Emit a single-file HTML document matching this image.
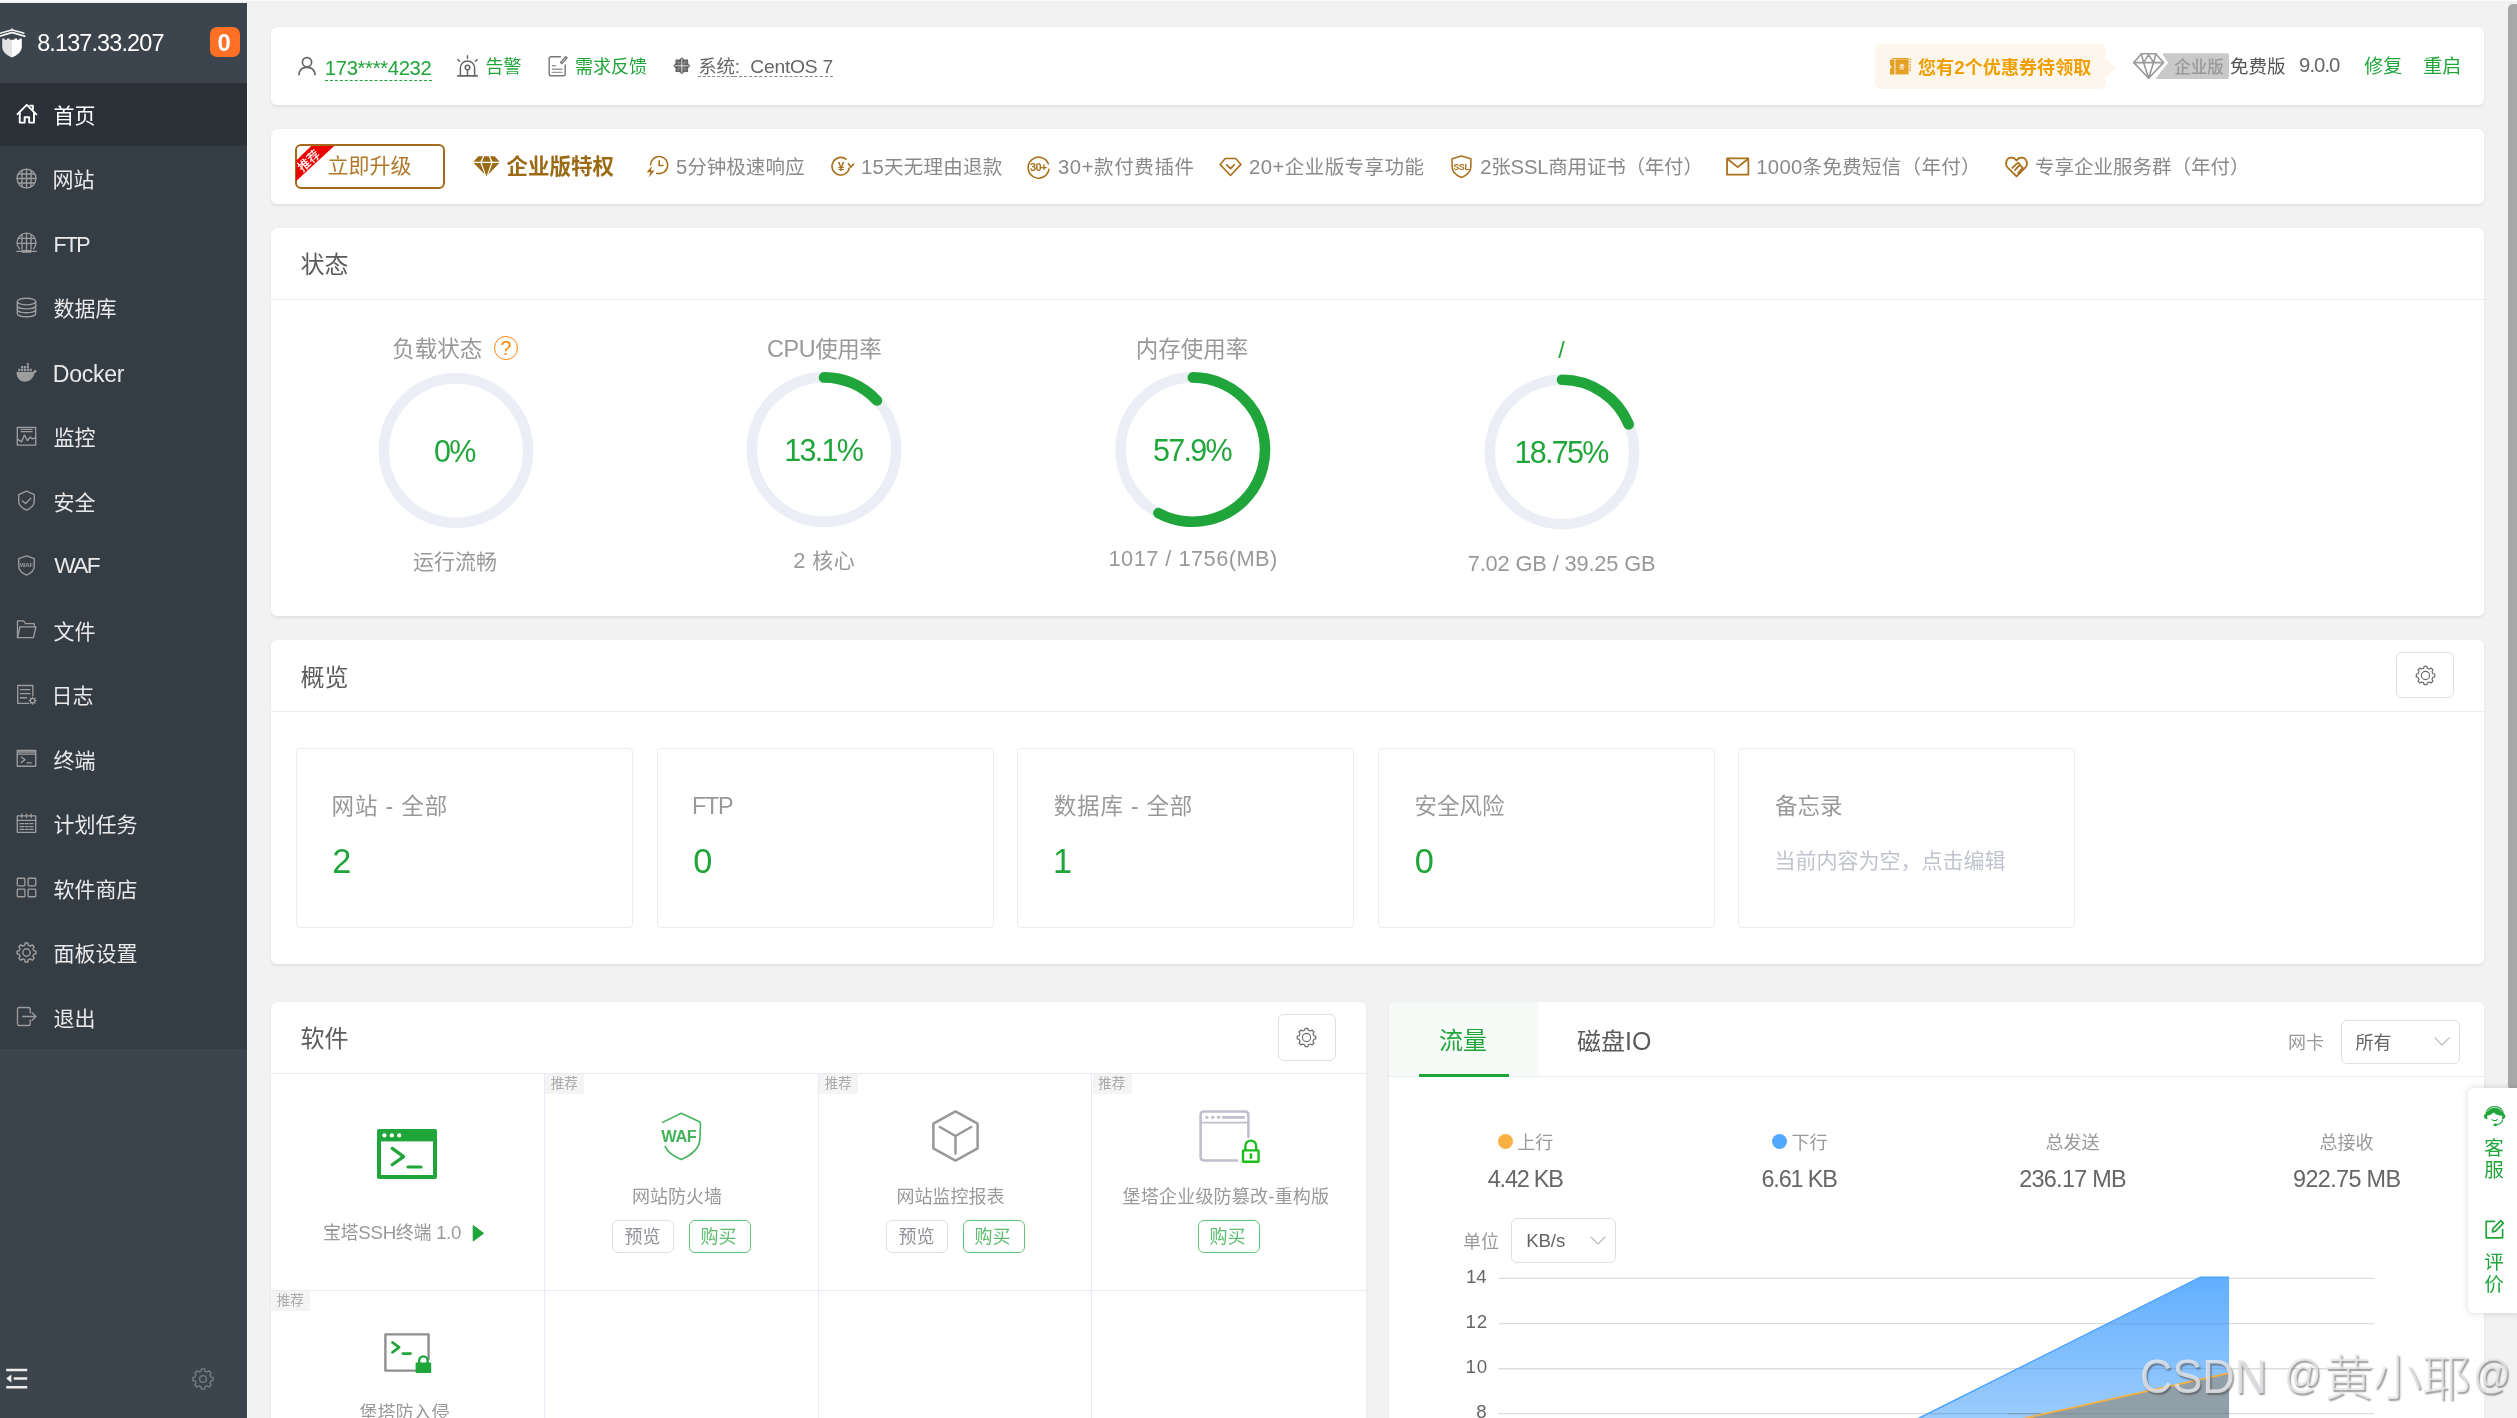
<!DOCTYPE html>
<html lang="zh-CN">
<head>
<meta charset="utf-8">
<title>宝塔Linux面板</title>
<style>
*{box-sizing:border-box;margin:0;padding:0}
html,body{width:2517px;height:1418px;background:#f2f2f2}
body{position:relative;font-family:"Liberation Sans","Noto Sans CJK SC",sans-serif}
#app{left:0;top:0;width:2517px;height:1418px;overflow:hidden;background:#f2f2f2;will-change:transform}
i{font-style:normal}
body div,body svg,body .t{position:absolute}
.t{white-space:nowrap;display:block}
.card{background:#fff;border-radius:6px;box-shadow:0 1.5px 3px 0 rgba(0,0,0,.07)}
svg{overflow:visible}
</style>
</head>
<body>
<div id="app">
<!-- sec_sidebar -->
<div class="side" style="left:0;top:3px;width:247px;height:1415px;background:#3c444d"></div>
<div style="left:0;top:83px;width:247px;height:965.5px;background:#353d44"></div>
<div style="left:0;top:83px;width:247px;height:63px;background:#2c3138"></div>
<div style="left:0;top:1336.6px;width:247px;height:1.2px;background:#38434a"></div>
<svg style="left:0px;top:27px;" width="26" height="31" viewBox="0 0 26 31"><g fill="#f2f2f2"><path d="M12 0.2 L12.6 2.2 L24.6 5.6 L24.2 7 L12 3.8 L0 7 L-0.4 5.6 L11.4 2.2Z"/><path d="M12 4.6 L25.6 8.6 L25.2 10.2 L12 6.4 L-1 10.2 L-1.4 8.6Z"/><path d="M2.2 11.4 H4.6 V12.8 H7 V11.4 H9.6 V12.8 H12 V30.4 C6.2 27.8 2.2 24.6 2.2 19.4Z" fill="#e4e4e4"/><path d="M12 12.8 H14.4 V11.4 H17 V12.8 H19.4 V11.4 H21.8 V19.4 C21.8 24.6 17.8 27.8 12 30.4Z" fill="#fff"/></g></svg>
<span class="t" style="left:37.2px;top:20.5px;font-size:22.5px;line-height:45px;color:#fff;letter-spacing:-0.85px;"><i style="font-size:1.04em">8.137.33.207</i></span>
<div style="left:210px;top:27px;width:30px;height:30px;background:#ff6f24;border-radius:7px"></div>
<span class="t" style="left:217.4px;top:19.5px;font-size:23px;line-height:46px;color:#fff;font-weight:700;"><i style="font-size:1.04em">0</i></span>
<svg style="left:15.9px;top:102.6px;" width="21" height="21" viewBox="-0.25 -0.25 20.5 20.5"><g fill="none" stroke="#fff" stroke-width="1.9" stroke-linecap="round" stroke-linejoin="round"><path d="M1.2 10.6 L10.3 1.6 L19.6 10.8"/><path d="M3.4 9.2 V18.9 H8.2 V13.6 H12.6 V18.9 H17.3 V9.2"/><path d="M13.6 2.3 H16.2 V5.6"/></g></svg>
<span class="t" style="left:53.5px;top:95.1px;font-size:21px;line-height:42px;color:#fff;">首页</span>
<svg style="left:15.9px;top:167.6px;" width="21" height="21" viewBox="-0.25 -0.25 20.5 20.5"><g fill="none" stroke="#9d9d9d" stroke-width="1.3" stroke-linecap="round" stroke-linejoin="round"><circle cx="10" cy="10" r="9.2"/><path d="M2 5.6H18M2 14.4H18M5.6 2V18M14.4 2V18M10 1V19M1 10H19" stroke-width="1.3"/></g></svg>
<span class="t" style="left:52.5px;top:158.7px;font-size:21px;line-height:42px;color:#e9e9e9;">网站</span>
<svg style="left:15.9px;top:232.1px;" width="21" height="21" viewBox="-0.25 -0.25 20.5 20.5"><g fill="none" stroke="#9d9d9d" stroke-width="1.3" stroke-linecap="round" stroke-linejoin="round"><path d="M3.2 16.2 A9.2 9.2 0 1 1 16.8 16.2"/><path d="M2 6H18M1 10.8H19M5.6 2.4V16.4M14.4 2.4V16.4M10 1V17" stroke-width="1.3"/><path d="M0.5 18.6H19.5" stroke-width="1.2"/><path d="M6 18.6H14" stroke-width="2.6"/></g></svg>
<span class="t" style="left:53.5px;top:224.1px;font-size:21px;line-height:42px;color:#e9e9e9;letter-spacing:-1.8px;letter-spacing:-1.7px"><i style="font-size:1.02em">FTP</i></span>
<svg style="left:15.9px;top:296.6px;" width="21" height="21" viewBox="-0.25 -0.25 20.5 20.5"><g fill="none" stroke="#9d9d9d" stroke-width="1.3" stroke-linecap="round" stroke-linejoin="round"><ellipse cx="10" cy="4.2" rx="9" ry="3.2"/><path d="M1 4.2V15.8C1 17.6 5 19 10 19S19 17.6 19 15.8V4.2"/><path d="M1 8.2C1 10 5 11.3 10 11.3S19 10 19 8.2M1 12C1 13.8 5 15.1 10 15.1S19 13.8 19 12"/></g></svg>
<span class="t" style="left:53.5px;top:287.7px;font-size:21px;line-height:42px;color:#e9e9e9;">数据库</span>
<svg style="left:15.9px;top:361.1px;" width="21" height="21" viewBox="-0.25 -0.25 20.5 20.5"><g fill="#9d9d9d" transform="translate(-0.4 1.6) scale(1.04)"><path d="M0.6 8.6H16.2C16.6 7.4 17.2 6.6 18.2 6.2C18.4 7 18.9 7.4 19.8 7.4C19.6 8.6 18.8 9.2 17.6 9.4C16.6 14.4 13 17.6 8.2 17.6C3.8 17.6 0.6 14.2 0.6 8.6Z"/><path d="M2.2 5.6H4.2V7.8H2.2zM4.9 5.6H6.9V7.8H4.9zM7.6 5.6H9.6V7.8H7.6zM10.3 5.6H12.3V7.8H10.3zM13 5.6H15V7.8H13zM4.9 2.9H6.9V5H4.9zM7.6 2.9H9.6V5H7.6zM10.3 2.9H12.3V5H10.3zM10.3 0.4H12.3V2.4H10.3z"/></g></svg>
<span class="t" style="left:52.8px;top:352.7px;font-size:21px;line-height:42px;color:#e9e9e9;letter-spacing:-0.3px;"><i style="font-size:1.1em">Docker</i></span>
<svg style="left:15.9px;top:425.6px;" width="21" height="21" viewBox="-0.25 -0.25 20.5 20.5"><g fill="none" stroke="#9d9d9d" stroke-width="1.3" stroke-linecap="round" stroke-linejoin="round"><rect x="1" y="1.2" width="18" height="17.2"/><path d="M4.6 3.2H15.6M4.6 5.2H15.6" stroke-width="1.1"/><path d="M1.4 12.8 L5.2 15.2 L8 8.6 L11 14 L13.6 10.6 L15.6 12.2 L18.8 11.4"/></g></svg>
<span class="t" style="left:53.5px;top:416.7px;font-size:21px;line-height:42px;color:#e9e9e9;">监控</span>
<svg style="left:15.9px;top:490.1px;" width="21" height="21" viewBox="-0.25 -0.25 20.5 20.5"><g fill="none" stroke="#9d9d9d" stroke-width="1.3" stroke-linecap="round" stroke-linejoin="round"><path d="M10 0.8 L17.6 4.2 V10.6 C17.6 14.6 14.8 17.4 10 19.4 C5.2 17.4 2.4 14.6 2.4 10.6 V4.2 Z"/><path d="M6 10.4 L9.2 13 L14.2 7.8"/></g></svg>
<span class="t" style="left:53.5px;top:482.1px;font-size:21px;line-height:42px;color:#e9e9e9;">安全</span>
<svg style="left:15.9px;top:554.6px;" width="21" height="21" viewBox="-0.25 -0.25 20.5 20.5"><g fill="none" stroke="#9d9d9d" stroke-width="1.3" stroke-linecap="round" stroke-linejoin="round"><path d="M10 0.6 L17.6 3.4 V10.6 C17.6 14.6 14.8 17.4 10 19.4 C5.2 17.4 2.4 14.6 2.4 10.6 V3.4 Z"/></g><text x="10" y="11.8" text-anchor="middle" font-family="Liberation Sans,sans-serif" font-weight="700" font-size="6" fill="#9d9d9d">WAF</text></svg>
<span class="t" style="left:54.2px;top:544.2px;font-size:21px;line-height:42px;color:#e9e9e9;letter-spacing:-1.6px;"><i style="font-size:1.08em">WAF</i></span>
<svg style="left:15.9px;top:619.1px;" width="21" height="21" viewBox="-0.25 -0.25 20.5 20.5"><g fill="none" stroke="#9d9d9d" stroke-width="1.3" stroke-linecap="round" stroke-linejoin="round"><path d="M1.2 18 V1.6 H7 L9 4.2 H17.6 V7.4"/><path d="M1.2 18 L3.6 7.4 H19.2 L16.8 18 Z"/></g></svg>
<span class="t" style="left:53.5px;top:611.1px;font-size:21px;line-height:42px;color:#e9e9e9;">文件</span>
<svg style="left:15.9px;top:683.6px;" width="21" height="21" viewBox="-0.25 -0.25 20.5 20.5"><g fill="none" stroke="#9d9d9d" stroke-width="1.3" stroke-linecap="round" stroke-linejoin="round"><path d="M12 18.6 H1.4 V1.2 H16.2 V11"/><path d="M4 5.2H13.4M4 9.2H13.4M4 13.2H10"/><circle cx="16" cy="16" r="2.2"/><path d="M16 12.6V13.6M16 18.4V19.4M12.6 16H13.6M18.4 16H19.4M13.6 13.6L14.3 14.3M17.7 17.7L18.4 18.4M13.6 18.4L14.3 17.7M17.7 14.3L18.4 13.6" stroke-width="1.1"/></g></svg>
<span class="t" style="left:51.5px;top:674.7px;font-size:21px;line-height:42px;color:#e9e9e9;">日志</span>
<svg style="left:15.9px;top:748.1px;" width="21" height="21" viewBox="-0.25 -0.25 20.5 20.5"><g fill="none" stroke="#9d9d9d" stroke-width="1.3" stroke-linecap="round" stroke-linejoin="round"><rect x="1" y="2" width="18" height="15.6"/><path d="M1 5.8H19" /><path d="M1.4 3.4H18.6" stroke-width="2.4" stroke-linecap="butt" opacity=".75"/><path d="M5 8.6 L8.6 11.2 L5 13.8M10.4 14.2H14.6"/></g></svg>
<span class="t" style="left:53.5px;top:740.1px;font-size:21px;line-height:42px;color:#e9e9e9;">终端</span>
<svg style="left:15.9px;top:812.6px;" width="21" height="21" viewBox="-0.25 -0.25 20.5 20.5"><g fill="none" stroke="#9d9d9d" stroke-width="1.3" stroke-linecap="round" stroke-linejoin="round"><rect x="1" y="2.6" width="18" height="16"/><path d="M1 7H19M5.4 0.8V4.2M10 0.8V4.2M14.6 0.8V4.2"/><path d="M3.6 10.2H7.4M8.8 10.2H11.8M13.2 10.2H16.4M3.6 13H7.4M8.8 13H11.8M13.2 13H16.4M3.6 15.8H7.4M8.8 15.8H11.8M13.2 15.8H16.4" stroke-width="1.2"/></g></svg>
<span class="t" style="left:53.5px;top:803.7px;font-size:21px;line-height:42px;color:#e9e9e9;">计划任务</span>
<svg style="left:15.9px;top:877.1px;" width="21" height="21" viewBox="-0.25 -0.25 20.5 20.5"><g fill="none" stroke="#9d9d9d" stroke-width="1.3" stroke-linecap="round" stroke-linejoin="round"><rect x="1" y="1" width="7.4" height="7.4" rx="0.8"/><rect x="11.6" y="1" width="7.4" height="7.4" rx="0.8"/><rect x="1" y="11.6" width="7.4" height="7.4" rx="0.8"/><rect x="11.6" y="11.6" width="7.4" height="7.4" rx="0.8"/></g></svg>
<span class="t" style="left:53.5px;top:869.1px;font-size:21px;line-height:42px;color:#e9e9e9;">软件商店</span>
<svg style="left:15.9px;top:941.6px;" width="21" height="21" viewBox="-0.25 -0.25 20.5 20.5"><g fill="none" stroke="#9d9d9d" stroke-width="1.4" stroke-linejoin="round"><path d="M8.30 2.90 L8.62 0.80 L11.38 0.80 L11.70 2.90 L13.81 3.78 L15.53 2.52 L17.48 4.47 L16.22 6.19 L17.10 8.30 L19.20 8.62 L19.20 11.38 L17.10 11.70 L16.22 13.81 L17.48 15.53 L15.53 17.48 L13.81 16.22 L11.70 17.10 L11.38 19.20 L8.62 19.20 L8.30 17.10 L6.19 16.22 L4.47 17.48 L2.52 15.53 L3.78 13.81 L2.90 11.70 L0.80 11.38 L0.80 8.62 L2.90 8.30 L3.78 6.19 L2.52 4.47 L4.47 2.52 L6.19 3.78Z"/><circle cx="10" cy="10" r="3.6"/></g></svg>
<span class="t" style="left:53.5px;top:932.7px;font-size:21px;line-height:42px;color:#e9e9e9;">面板设置</span>
<svg style="left:15.9px;top:1006.1px;" width="21" height="21" viewBox="-0.25 -0.25 20.5 20.5"><g fill="none" stroke="#9d9d9d" stroke-width="1.3" stroke-linecap="round" stroke-linejoin="round"><path d="M13.6 6.4 V2.8 C13.6 1.8 13 1.2 12 1.2 H2.8 C1.8 1.2 1.2 1.8 1.2 2.8 V17.2 C1.2 18.2 1.8 18.8 2.8 18.8 H12 C13 18.8 13.6 18.2 13.6 17.2 V13.6"/><path d="M6.4 10H19M15.4 6.2 L19.2 10 L15.4 13.8"/></g></svg>
<span class="t" style="left:53.5px;top:998.1px;font-size:21px;line-height:42px;color:#e9e9e9;">退出</span>
<svg style="left:6px;top:1368px;" width="22" height="22" viewBox="0 0 22 22"><g fill="none" stroke="#ededed" stroke-width="2.5" stroke-linecap="butt"><path d="M0.2 2H21.2M7.8 10.6H21.2M0.2 19.2H21.2"/></g><path d="M0.2 10.6 L5.4 6.4 V14.8Z" fill="#ededed"/></svg>
<svg style="left:192px;top:1368px;" width="22" height="22" viewBox="0 0 22 22"><g fill="none" stroke="#757b82" stroke-width="1.4" stroke-linejoin="round"><path d="M9.09 3.03 L9.48 0.91 L12.52 0.91 L12.91 3.03 L15.28 4.01 L17.06 2.80 L19.20 4.94 L17.99 6.72 L18.97 9.09 L21.09 9.48 L21.09 12.52 L18.97 12.91 L17.99 15.28 L19.20 17.06 L17.06 19.20 L15.28 17.99 L12.91 18.97 L12.52 21.09 L9.48 21.09 L9.09 18.97 L6.72 17.99 L4.94 19.20 L2.80 17.06 L4.01 15.28 L3.03 12.91 L0.91 12.52 L0.91 9.48 L3.03 9.09 L4.01 6.72 L2.80 4.94 L4.94 2.80 L6.72 4.01Z"/><circle cx="11" cy="11" r="3.4"/></g></svg>
<!-- sec_top -->
<div style="left:0;top:0;width:2517px;height:3px;background:linear-gradient(#fcfcfc,#f4f4f4 55%,#e6e6e6)"></div>
<div style="left:247px;top:3px;width:1px;height:1415px;background:#f8f8f8"></div>
<div class="card" style="left:271px;top:27px;width:2213px;height:78px"></div>
<svg style="left:298px;top:56px;" width="18" height="20" viewBox="0 0 18 20"><g fill="none" stroke="#666" stroke-width="1.7" stroke-linecap="round"><circle cx="9" cy="6.2" r="4.6"/><path d="M0.9 18.6 C1.4 13.6 4.6 11.4 9 11.4 S16.6 13.6 17.1 18.6"/></g></svg>
<span class="t" style="left:324.8px;top:49px;font-size:19.5px;line-height:39px;color:#20a53a;letter-spacing:-0.35px;"><i style="font-size:1.04em">173****4232</i></span>
<div style="left:325px;top:79.7px;width:107px;height:0;border-top:1.5px dashed #20a53a"></div>
<svg style="left:457px;top:55px;" width="21" height="22" viewBox="0 0 21 22"><g fill="none" stroke="#666" stroke-width="1.5" stroke-linecap="round"><path d="M3.4 20.6 V13 A7.1 7.1 0 0 1 17.6 13 V20.6"/><path d="M0.8 20.8 H20.2" stroke-width="1.7"/><circle cx="10.5" cy="12.6" r="2.3"/><path d="M10.5 15 V20.4M10.5 0.8 V3.2M0.9 4.6 L2.4 6.2M20.1 4.6 L18.6 6.2"/></g></svg>
<span class="t" style="left:485.5px;top:49px;font-size:18px;line-height:36px;color:#20a53a;">告警</span>
<svg style="left:548px;top:55px;" width="20" height="22" viewBox="0 0 20 22"><g fill="none" stroke="#777" stroke-width="1.4" stroke-linecap="round" stroke-linejoin="round"><path d="M12.4 1.8 H3 C2 1.8 1.2 2.6 1.2 3.6 V19 C1.2 20 2 20.8 3 20.8 H15.4 C16.4 20.8 17.2 20 17.2 19 V10"/><path d="M12.6 7.4 L17.6 1.6 L19 2.8 L14 8.6 Z"/><path d="M4.4 10.8 H7.4M4.4 14.2 H14M4.4 17.4 H14" stroke="#999"/></g></svg>
<span class="t" style="left:575px;top:49px;font-size:18px;line-height:36px;color:#20a53a;">需求反馈</span>
<svg style="left:673.4px;top:57.4px;" width="17.6" height="17.6" viewBox="0 0 17.6 17.6"><path d="M8.8 0.3 L11.3 2.5 H15.1 V6.3 L17.3 8.8 L15.1 11.3 V15.1 H11.3 L8.8 17.3 L6.3 15.1 H2.5 V11.3 L0.3 8.8 L2.5 6.3 V2.5 H6.3 Z" fill="#5c5c5c"/><g stroke="#fff" stroke-width="1" opacity=".8"><path d="M8.8 1.4V16.2M1.4 8.8H16.2"/></g><g stroke="#fff" stroke-width="0.55" opacity=".4"><path d="M3.4 3.4L14.2 14.2M14.2 3.4L3.4 14.2M5.7 2.6V15M11.9 2.6V15M2.6 5.7H15M2.6 11.9H15"/></g></svg>
<span class="t" style="left:698.2px;top:48px;font-size:18.5px;line-height:37px;color:#666;letter-spacing:-0.2px;text-decoration:underline dashed #888;text-decoration-thickness:1px;text-underline-offset:2.5px">系统<i style="font-size:1.04em">:  CentOS 7</i></span>
<div style="left:1875px;top:44px;width:231px;height:44.5px;background:#fdf6ec;border-radius:6px"></div>
<div style="left:2105.8px;top:58.6px;width:0;height:0;border-top:9.7px solid transparent;border-bottom:9.7px solid transparent;border-left:11.8px solid #fdf6ec"></div>
<svg style="left:1890px;top:58px;" width="21" height="17" viewBox="0 0 21 17"><g fill="#e3a024"><path d="M0 1.4 H4.4 V16.4 H0 V10.6 Q1.6 10.2 1.6 8.9 Q1.6 7.6 0 7.2 Z"/><path d="M2.4 0 H18.6 V1.2 H2.4 Z"/><path d="M5.4 1.4 H18.6 V16.4 H5.4 Z"/><path d="M19.4 0.4 H20.8 V2 H19.4zM19.4 3.2 H20.8 V4.8 H19.4zM19.4 6 H20.8 V7.6 H19.4zM19.4 8.8 H20.8 V10.4 H19.4zM19.4 11.6 H20.8 V13.2 H19.4z"/></g><g stroke="#fdf6ec" stroke-width="0.9" fill="none"><path d="M9.6 7.4 H14.2M9.2 9.2 H14.6M11.9 6 V9.2M10 12 L11.9 9.6 L13.8 12M10.6 6.2 L11 7M13.2 6.2 L12.8 7"/></g></svg>
<span class="t" style="left:1918px;top:49.5px;font-size:18px;line-height:36px;color:#ef9f00;font-weight:700;letter-spacing:0.1px;">您有<i style="font-size:1.04em">2</i>个优惠券待领取</span>
<svg style="left:2133px;top:52px;" width="97" height="28" viewBox="0 0 97 28"><path d="M30.6 1.2 H94 Q96 1.2 96 3.2 V25 Q96 27 94 27 H23.4 Q22.2 27 23 26 L34.6 11.6 Q35.2 10.8 34.6 10 L29.8 2.4 Q29.2 1.2 30.6 1.2Z" fill="#c9c9c9"/><g fill="none" stroke="#999" stroke-width="1.6" stroke-linejoin="round" stroke-linecap="round"><path d="M8.4 1.8 H22.8 L30.4 10.6 L15.6 26.2 L0.8 10.6 Z"/><path d="M0.8 10.6 H30.4M8.4 1.8 L10.6 10.6 L15.6 26.2 L20.6 10.6 L22.8 1.8M10.6 10.6 L15.6 2.6 L20.6 10.6"/></g></svg>
<span class="t" style="left:2174.2px;top:50.5px;font-size:16.5px;line-height:33px;color:#999;font-weight:500;">企业版</span>
<span class="t" style="left:2229.9px;top:48.1px;font-size:18.5px;line-height:37px;color:#555;">免费版</span>
<span class="t" style="left:2299.1px;top:46.2px;font-size:19.5px;line-height:39px;color:#666;letter-spacing:-0.95px;"><i style="font-size:1.04em">9.0.0</i></span>
<span class="t" style="left:2364.2px;top:48.1px;font-size:19px;line-height:38px;color:#20a53a;">修复</span>
<span class="t" style="left:2423.2px;top:48.4px;font-size:19px;line-height:38px;color:#20a53a;">重启</span>
<div class="card" style="left:271px;top:129px;width:2213px;height:75px"></div>
<div style="left:295px;top:144px;width:150px;height:45px;border:2px solid #a6691c;border-radius:6px"></div>
<svg style="left:295px;top:144px;" width="45" height="45" viewBox="0 0 45 45"><path d="M1.2 16.4 L16.2 2 H39.2 L1.2 37 Z" fill="#ec0000"/></svg>
<span class="t" style="left:296.5px;top:148.6px;font-size:12.5px;line-height:25px;color:#fff;font-weight:500;transform:rotate(-42deg);transform-origin:50% 50%">推荐</span>
<span class="t" style="left:327.4px;top:144.8px;font-size:21px;line-height:42px;color:#b07a2a;">立即升级</span>
<svg style="left:473.2px;top:155.8px;" width="27.2" height="20.8" viewBox="0 0 27.2 20.8"><g fill="#9b6a14"><path d="M5.4 0.2 H10 L7.4 5.8 H0.4Z"/><path d="M11.2 0.2 H15.8 L18 5.8 H9Z"/><path d="M17 0.2 H21.6 L26.6 5.8 H19.6Z"/><path d="M0.6 7 H7.4 L11.8 18.6Z"/><path d="M8.8 7 H18.2 L13.5 20.6Z"/><path d="M19.6 7 H26.4 L15.2 18.6Z"/></g></svg>
<span class="t" style="left:506.5px;top:145.8px;font-size:21.5px;line-height:43px;color:#9b6a14;font-weight:700;">企业版特权</span>
<svg style="left:645.5px;top:155px;" width="23" height="23" viewBox="0 0 22 22"><g fill="none" stroke="#a8701a" stroke-width="1.5" stroke-linecap="round" stroke-linejoin="round"><path d="M4.4 9.4 A8.2 8.2 0 1 1 10.2 17.4"/><path d="M12.6 5.6 V10 H16.2"/></g><path d="M5.6 10.6 L0.6 16.6 H4.2 L2.6 21.6 L8.2 14.8 H4.6Z" fill="#a8701a"/></svg>
<span class="t" style="left:675.9px;top:148px;font-size:19.5px;line-height:39px;color:#8a8a8a;letter-spacing:0.05px;"><i style="font-size:1.04em">5</i>分钟极速响应</span>
<svg style="left:830.8px;top:155px;" width="23" height="23" viewBox="0 0 22 22"><g fill="none" stroke="#a8701a" stroke-width="1.5" stroke-linecap="round" stroke-linejoin="round"><path d="M17.6 12.4 A8.4 8.4 0 1 1 14.4 4"/><path d="M16.6 8.2 L19 11.6 L21.6 8.6"/></g><text x="9.6" y="15.2" text-anchor="middle" font-family="Liberation Sans,sans-serif" font-weight="700" font-size="11.5" fill="#a8701a">¥</text></svg>
<span class="t" style="left:860.9px;top:148px;font-size:19.5px;line-height:39px;color:#8a8a8a;letter-spacing:0.25px;"><i style="font-size:1.04em">15</i>天无理由退款</span>
<svg style="left:1027px;top:155px;" width="23" height="23" viewBox="0 0 22 22"><g fill="none" stroke="#a8701a" stroke-width="1.5" stroke-linecap="round"><path d="M20.4 8.4 A10 10 0 1 0 21 13.6"/></g><text x="10.8" y="15" text-anchor="middle" font-family="Liberation Sans,sans-serif" font-weight="700" font-size="10.5" letter-spacing="-0.6" fill="#a8701a">30+</text></svg>
<span class="t" style="left:1057.9px;top:148px;font-size:19.5px;line-height:39px;color:#8a8a8a;letter-spacing:0.6px;"><i style="font-size:1.04em">30+</i>款付费插件</span>
<svg style="left:1219px;top:155px;" width="23" height="23" viewBox="0 0 22 22"><g fill="none" stroke="#a8701a" stroke-width="1.5" stroke-linejoin="round" stroke-linecap="round"><path d="M6 3.4 H16 L21 9 L11 19.6 L1 9 Z"/><path d="M7.4 9.4 L11 13 L14.6 9.4"/></g></svg>
<span class="t" style="left:1249px;top:148px;font-size:19.5px;line-height:39px;color:#8a8a8a;letter-spacing:0.45px;"><i style="font-size:1.04em">20+</i>企业版专享功能</span>
<svg style="left:1451px;top:155px;" width="23" height="23" viewBox="0 0 22 22"><g fill="none" stroke="#a8701a" stroke-width="1.5" stroke-linejoin="round"><path d="M10 1 L19 3.6 V11 C19 16 15.4 19.4 10 21.6 C4.6 19.4 1 16 1 11 V3.6 Z"/></g><text x="10" y="14.4" text-anchor="middle" font-family="Liberation Sans,sans-serif" font-weight="700" font-size="8.6" letter-spacing="-0.3" fill="#a8701a">SSL</text></svg>
<span class="t" style="left:1480.2px;top:148px;font-size:19.5px;line-height:39px;color:#8a8a8a;letter-spacing:-0.2px;"><i style="font-size:1.04em">2</i>张<i style="font-size:1.04em">SSL</i>商用证书（年付）</span>
<svg style="left:1726px;top:155px;" width="23" height="23" viewBox="0 0 22 22"><g fill="none" stroke="#a8701a" stroke-width="1.7" stroke-linejoin="round"><rect x="1" y="3.2" width="20.4" height="15.6"/><path d="M1.4 3.8 L11.2 11.6 L21 3.8"/></g></svg>
<span class="t" style="left:1756.3px;top:148px;font-size:19.5px;line-height:39px;color:#8a8a8a;letter-spacing:0.3px;"><i style="font-size:1.04em">1000</i>条免费短信（年付）</span>
<svg style="left:2005px;top:155px;" width="23" height="23" viewBox="0 0 22 22"><g fill="none" stroke="#a8701a" stroke-width="1.7" stroke-linejoin="round" stroke-linecap="round"><path d="M11 20.4 L2.6 12 C-0.4 8.8 1 2.6 6.2 2.6 C8.4 2.6 10 3.8 11 5.4 C12 3.8 13.6 2.6 15.8 2.6 C21 2.6 22.4 8.8 19.4 12 Z"/><path d="M7 12.4 L11.6 8 C13 6.8 14.8 8.6 13.6 10 L9.6 14.4"/><path d="M14.4 9.6 L17 12.4 L12.6 17"/></g></svg>
<span class="t" style="left:2035px;top:148px;font-size:19.5px;line-height:39px;color:#8a8a8a;">专享企业服务群（年付）</span>
<!-- sec_status -->
<div class="card" style="left:271px;top:228px;width:2213px;height:388px"></div>
<div style="left:271px;top:299px;width:2213px;height:1px;background:#ececec"></div>
<span class="t" style="left:300.5px;top:241.1px;font-size:24px;line-height:48px;color:#5c5c5c;">状态</span>
<svg style="left:0;top:0" width="2517" height="700" viewBox="0 0 2517 700"><circle cx="456" cy="450.6" r="72.2" fill="none" stroke="#ebeef5" stroke-width="10.6"/></svg>
<span class="t" style="left:392.3px;top:327.2px;font-size:22.5px;line-height:45px;color:#999;">负载状态</span>
<span class="t" style="left:434px;top:420.8px;font-size:30.5px;line-height:61px;color:#20a53a;letter-spacing:-1.7px;">0%</span>
<span class="t" style="left:413px;top:541.1px;font-size:21px;line-height:42px;color:#999;">运行流畅</span>
<svg style="left:0;top:0" width="2517" height="700" viewBox="0 0 2517 700"><circle cx="824" cy="449.6" r="72.2" fill="none" stroke="#ebeef5" stroke-width="10.6"/><path d="M824 377.40000000000003 A72.2 72.2 0 0 1 876.94 400.51" fill="none" stroke="#20a53a" stroke-width="10.6" stroke-linecap="round"/></svg>
<span class="t" style="left:767.1px;top:326.9px;font-size:22.5px;line-height:45px;color:#999;letter-spacing:-0.45px;"><i style="font-size:1.04em">CPU</i>使用率</span>
<span class="t" style="left:784.2px;top:419.8px;font-size:30.5px;line-height:61px;color:#20a53a;letter-spacing:-1.7px;">13.1%</span>
<span class="t" style="left:793.3px;top:539.5px;font-size:21px;line-height:42px;color:#999;letter-spacing:0.45px;"><i style="font-size:1.04em">2</i> 核心</span>
<svg style="left:0;top:0" width="2517" height="700" viewBox="0 0 2517 700"><circle cx="1192.8" cy="449.6" r="72.2" fill="none" stroke="#ebeef5" stroke-width="10.6"/><path d="M1192.8 377.40000000000003 A72.2 72.2 0 1 1 1158.42 513.09" fill="none" stroke="#20a53a" stroke-width="10.6" stroke-linecap="round"/></svg>
<span class="t" style="left:1135.7px;top:326.9px;font-size:22.5px;line-height:45px;color:#999;">内存使用率</span>
<span class="t" style="left:1153px;top:419.8px;font-size:30.5px;line-height:61px;color:#20a53a;letter-spacing:-1.7px;">57.9%</span>
<span class="t" style="left:1108.5px;top:538.1px;font-size:21px;line-height:42px;color:#999;letter-spacing:0.45px;"><i style="font-size:1.04em">1017 / 1756(MB)</i></span>
<svg style="left:0;top:0" width="2517" height="700" viewBox="0 0 2517 700"><circle cx="1562" cy="452" r="72.2" fill="none" stroke="#ebeef5" stroke-width="10.6"/><path d="M1562 379.8 A72.2 72.2 0 0 1 1628.70 424.37" fill="none" stroke="#20a53a" stroke-width="10.6" stroke-linecap="round"/></svg>
<span class="t" style="left:1558.2px;top:328.4px;font-size:22.5px;line-height:45px;color:#20a53a;letter-spacing:1.5px;"><i style="font-size:1.04em">/</i></span>
<span class="t" style="left:1514.4px;top:422.2px;font-size:30.5px;line-height:61px;color:#20a53a;letter-spacing:-1.7px;">18.75%</span>
<span class="t" style="left:1467.7px;top:543px;font-size:21px;line-height:42px;color:#999;letter-spacing:-0.15px;"><i style="font-size:1.04em">7.02 GB / 39.25 GB</i></span>
<div style="left:494.1px;top:335.9px;width:23.8px;height:23.8px;border:1.6px solid #ff8206;border-radius:50%"></div>
<span class="t" style="left:500.6px;top:328.7px;font-size:19.5px;line-height:39px;color:#ff8206;">?</span>
<!-- sec_overview -->
<div class="card" style="left:271px;top:640px;width:2213px;height:324px"></div>
<div style="left:271px;top:711px;width:2213px;height:1px;background:#ececec"></div>
<span class="t" style="left:300.5px;top:653.6px;font-size:24px;line-height:48px;color:#5c5c5c;">概览</span>
<div style="left:2396px;top:652px;width:58px;height:46px;border:1px solid #dcdfe6;border-radius:6px;background:#fff"></div>
<svg style="left:2414.5px;top:665px;" width="21" height="21" viewBox="0 0 21 21"><g fill="none" stroke="#6a6c70" stroke-width="1.2" stroke-linejoin="round"><path d="M8.73 3.11 L9.12 1.30 L11.88 1.30 L12.27 3.11 L14.47 4.02 L16.03 3.02 L17.98 4.97 L16.98 6.53 L17.89 8.73 L19.70 9.12 L19.70 11.88 L17.89 12.27 L16.98 14.47 L17.98 16.03 L16.03 17.98 L14.47 16.98 L12.27 17.89 L11.88 19.70 L9.12 19.70 L8.73 17.89 L6.53 16.98 L4.97 17.98 L3.02 16.03 L4.02 14.47 L3.11 12.27 L1.30 11.88 L1.30 9.12 L3.11 8.73 L4.02 6.53 L3.02 4.97 L4.97 3.02 L6.53 4.02Z"/><circle cx="10.5" cy="10.5" r="4.1"/></g></svg>
<div style="left:296.0px;top:748px;width:337px;height:179.5px;border:1px solid #ebebeb;border-radius:4px"></div>
<span class="t" style="left:331.5px;top:783.5px;font-size:22.5px;line-height:45px;color:#999;letter-spacing:0.9px;">网站 <i style="font-size:1.04em">-</i> 全部</span>
<span class="t" style="left:332.2px;top:827.5px;font-size:33px;line-height:66px;color:#20a53a;letter-spacing:-0.5px;"><i style="font-size:1.04em">2</i></span>
<div style="left:656.6px;top:748px;width:337px;height:179.5px;border:1px solid #ebebeb;border-radius:4px"></div>
<span class="t" style="left:692px;top:783.5px;font-size:22.5px;line-height:45px;color:#999;letter-spacing:-1.25px;"><i style="font-size:1.04em">FTP</i></span>
<span class="t" style="left:693.2px;top:827.5px;font-size:33px;line-height:66px;color:#20a53a;letter-spacing:-0.5px;"><i style="font-size:1.04em">0</i></span>
<div style="left:1017.2px;top:748px;width:337px;height:179.5px;border:1px solid #ebebeb;border-radius:4px"></div>
<span class="t" style="left:1053.8px;top:783.5px;font-size:22.5px;line-height:45px;color:#999;letter-spacing:0.8px;">数据库 <i style="font-size:1.04em">-</i> 全部</span>
<span class="t" style="left:1053px;top:827.5px;font-size:33px;line-height:66px;color:#20a53a;letter-spacing:-1.8px;"><i style="font-size:1.04em">1</i></span>
<div style="left:1377.8px;top:748px;width:337px;height:179.5px;border:1px solid #ebebeb;border-radius:4px"></div>
<span class="t" style="left:1414.5px;top:783.5px;font-size:22.5px;line-height:45px;color:#999;">安全风险</span>
<span class="t" style="left:1414.8px;top:827.5px;font-size:33px;line-height:66px;color:#20a53a;letter-spacing:-0.5px;"><i style="font-size:1.04em">0</i></span>
<div style="left:1738.4px;top:748px;width:337px;height:179.5px;border:1px solid #ebebeb;border-radius:4px"></div>
<span class="t" style="left:1775px;top:783.5px;font-size:22.5px;line-height:45px;color:#999;">备忘录</span>
<span class="t" style="left:1774.5px;top:840px;font-size:21px;line-height:42px;color:#c0c4cc;">当前内容为空，点击编辑</span>
<!-- sec_soft -->
<div class="card" style="left:271px;top:1002px;width:1094.5px;height:430px;border-radius:6px 6px 0 0"></div>
<span class="t" style="left:300.5px;top:1014.6px;font-size:24px;line-height:48px;color:#5c5c5c;">软件</span>
<div style="left:1277.5px;top:1014px;width:58.5px;height:47px;border:1px solid #dcdfe6;border-radius:6px;background:#fff"></div>
<svg style="left:1296px;top:1027px;" width="21" height="21" viewBox="0 0 21 21"><g fill="none" stroke="#6a6c70" stroke-width="1.2" stroke-linejoin="round"><path d="M8.73 3.11 L9.12 1.30 L11.88 1.30 L12.27 3.11 L14.47 4.02 L16.03 3.02 L17.98 4.97 L16.98 6.53 L17.89 8.73 L19.70 9.12 L19.70 11.88 L17.89 12.27 L16.98 14.47 L17.98 16.03 L16.03 17.98 L14.47 16.98 L12.27 17.89 L11.88 19.70 L9.12 19.70 L8.73 17.89 L6.53 16.98 L4.97 17.98 L3.02 16.03 L4.02 14.47 L3.11 12.27 L1.30 11.88 L1.30 9.12 L3.11 8.73 L4.02 6.53 L3.02 4.97 L4.97 3.02 L6.53 4.02Z"/><circle cx="10.5" cy="10.5" r="4.1"/></g></svg>
<div style="left:271px;top:1073px;width:1094.5px;height:1px;background:#ebebf7"></div>
<div style="left:271px;top:1290px;width:1094.5px;height:1px;background:#ebebf7"></div>
<div style="left:544px;top:1074px;width:1px;height:344px;background:#ebebf7"></div>
<div style="left:818px;top:1074px;width:1px;height:344px;background:#ebebf7"></div>
<div style="left:1091px;top:1074px;width:1px;height:344px;background:#ebebf7"></div>
<svg style="left:377px;top:1129px;" width="60" height="50" viewBox="0 0 60 50"><rect x="0" y="0" width="60" height="50" rx="2" fill="#20a53a"/><rect x="4" y="12.4" width="52" height="33.6" fill="#fff"/><circle cx="7.4" cy="6.4" r="2.1" fill="#fff"/><circle cx="14.8" cy="6.4" r="2.1" fill="#fff"/><circle cx="22.2" cy="6.4" r="2.1" fill="#fff"/><path d="M15.2 19.4 L26.6 27.6 L15.2 35.8M31 38 H44" fill="none" stroke="#20a53a" stroke-width="3.2" stroke-linecap="round" stroke-linejoin="round"/></svg>
<span class="t" style="left:322.9px;top:1215.2px;font-size:18px;line-height:36px;color:#999;letter-spacing:-0.3px;">宝塔<i style="font-size:1.04em">SSH</i>终端 <i style="font-size:1.04em">1.0</i></span>
<svg style="left:472.4px;top:1225px;" width="12" height="17" viewBox="0 0 12 17"><path d="M1.2 0.6 L11.6 8.3 L1.2 16 Z" fill="#20a53a" stroke="#20a53a" stroke-width="1" stroke-linejoin="round"/></svg>
<div style="left:545px;top:1074px;width:39px;height:20px;background:#f4f4f4"></div>
<span class="t" style="left:550.7px;top:1070.2px;font-size:13.5px;line-height:27px;color:#aaa;">推荐</span>
<svg style="left:660px;top:1111.5px;" width="42" height="49" viewBox="0 0 42 49"><path d="M2.6 10.4 L21.2 1.2 L39 9.4 Q40.6 10.2 40.5 12 L39.9 27.4 C39.4 35.6 32.6 42.6 21.2 47.6 C13.4 44.2 7.4 39.8 5.2 34.6" fill="none" stroke="#45b35a" stroke-width="1.6" stroke-linecap="round" stroke-linejoin="round"/><text x="18.8" y="30.1" text-anchor="middle" font-family="Liberation Sans,sans-serif" font-weight="700" font-size="16.4" letter-spacing="-0.5" fill="#45b35a" stroke="#fff" stroke-width="0.5" paint-order="stroke">WAF</text></svg>
<span class="t" style="left:632px;top:1178.6px;font-size:18px;line-height:36px;color:#999;">网站防火墙</span>
<div style="left:612px;top:1220px;width:62px;height:33px;border:1px solid #dcdfe6;border-radius:6px;background:#fff"></div>
<span class="t" style="left:624.5px;top:1219px;font-size:18px;line-height:36px;color:#909399;">预览</span>
<div style="left:689px;top:1220px;width:62px;height:33px;border:1px solid #67c277;border-radius:6px;background:#fff"></div>
<span class="t" style="left:700.5px;top:1219px;font-size:18px;line-height:36px;color:#5bbd6d;">购买</span>
<div style="left:819px;top:1074px;width:39px;height:20px;background:#f4f4f4"></div>
<span class="t" style="left:824.7px;top:1070.2px;font-size:13.5px;line-height:27px;color:#aaa;">推荐</span>
<svg style="left:930.5px;top:1110px;" width="49" height="52" viewBox="0 0 49 52"><g fill="none" stroke="#999" stroke-width="2.5" stroke-linejoin="round" stroke-linecap="round"><path d="M24.5 1.4 L46.6 13.6 V38.4 L24.5 50.6 L2.4 38.4 V13.6 Z"/><path d="M8.8 17 L24.5 26 L40.2 17M24.5 26 V43.6"/></g></svg>
<span class="t" style="left:896.6px;top:1178.6px;font-size:18px;line-height:36px;color:#999;">网站监控报表</span>
<div style="left:886px;top:1220px;width:62px;height:33px;border:1px solid #dcdfe6;border-radius:6px;background:#fff"></div>
<span class="t" style="left:898.5px;top:1219px;font-size:18px;line-height:36px;color:#909399;">预览</span>
<div style="left:963px;top:1220px;width:62px;height:33px;border:1px solid #67c277;border-radius:6px;background:#fff"></div>
<span class="t" style="left:974.5px;top:1219px;font-size:18px;line-height:36px;color:#5bbd6d;">购买</span>
<div style="left:1092.5px;top:1074px;width:39px;height:20px;background:#f4f4f4"></div>
<span class="t" style="left:1098.2px;top:1070.2px;font-size:13.5px;line-height:27px;color:#aaa;">推荐</span>
<svg style="left:1198.5px;top:1109.5px;" width="61" height="53" viewBox="0 0 61 53"><g fill="none" stroke="#bebecd" stroke-width="2.5" stroke-linejoin="round" stroke-linecap="round"><path d="M38 50.4 H5 C3 50.4 1.6 49 1.6 47 V5 C1.6 3 3 1.6 5 1.6 H46 C48 1.6 49.4 3 49.4 5 V27"/><path d="M1.6 12.6 H49.4" stroke-width="1.6"/><path d="M24 7.4 H44.6" stroke-width="2.6"/><path d="M7.4 7.4 H8.4M13.2 7.4 H14.2M19 7.4 H20" stroke-width="2.6"/></g><g fill="none" stroke="#1ebd1e" stroke-width="2.4"><path d="M46.4 40 V36 A5.4 5.4 0 0 1 57.2 36 V40"/><rect x="44" y="40.4" width="15.6" height="11.4" rx="0.6"/></g><rect x="50.6" y="43.4" width="2.6" height="5.4" fill="#1ebd1e"/></svg>
<span class="t" style="left:1122.6px;top:1178.6px;font-size:18px;line-height:36px;color:#999;letter-spacing:0.2px;">堡塔企业级防篡改<i style="font-size:1.04em">-</i>重构版</span>
<div style="left:1198px;top:1220px;width:62px;height:33px;border:1px solid #67c277;border-radius:6px;background:#fff"></div>
<span class="t" style="left:1209.5px;top:1219px;font-size:18px;line-height:36px;color:#5bbd6d;">购买</span>
<div style="left:271px;top:1291px;width:39px;height:20px;background:#f4f4f4"></div>
<span class="t" style="left:276.7px;top:1287.2px;font-size:13.5px;line-height:27px;color:#aaa;">推荐</span>
<svg style="left:383.5px;top:1333px;" width="47" height="40" viewBox="0 0 47 40"><g fill="none" stroke-linecap="round" stroke-linejoin="round"><path d="M31 37.6 H1.4 V1.4 H44.6 V26" stroke="#8f8f8f" stroke-width="2.4"/><path d="M8.4 9.4 L15.2 14.4 L8.4 19.4M18.8 20.6 H26.6" stroke="#20a53a" stroke-width="2.6"/><path d="M35.2 30 V27.6 A4.2 4.2 0 0 1 43.6 27.6 V30" stroke="#20a53a" stroke-width="2.4"/></g><rect x="31.6" y="29.6" width="15.6" height="10.4" rx="1" fill="#20a53a"/></svg>
<span class="t" style="left:359.5px;top:1395px;font-size:18px;line-height:36px;color:#999;">堡塔防入侵</span>
<!-- sec_net -->
<div class="card" style="left:1389px;top:1002px;width:1095px;height:430px;border-radius:6px 6px 0 0"></div>
<div style="left:1389px;top:1002px;width:150px;height:74px;background:#f7fbf8;border-radius:6px 0 0 0"></div>
<div style="left:1389px;top:1076px;width:1095px;height:1px;background:#e8ebf5"></div>
<div style="left:1419px;top:1074px;width:90px;height:3px;background:#20a53a"></div>
<span class="t" style="left:1439px;top:1017.2px;font-size:24px;line-height:48px;color:#20a53a;">流量</span>
<span class="t" style="left:1577px;top:1016.7px;font-size:24px;line-height:48px;color:#5a5a5a;">磁盘<i style="font-size:1.04em">IO</i></span>
<span class="t" style="left:2288px;top:1025px;font-size:18px;line-height:36px;color:#999;">网卡</span>
<div style="left:2340.5px;top:1019.5px;width:119.5px;height:44px;border:1px solid #dcdfe6;border-radius:6px;background:#fff"></div>
<span class="t" style="left:2355.5px;top:1025px;font-size:18px;line-height:36px;color:#666;">所有</span>
<svg style="left:2434px;top:1037px;" width="16" height="9" viewBox="0 0 16 9"><path d="M1 1 L8 8 L15 1" fill="none" stroke="#bcbfc5" stroke-width="1.4" stroke-linecap="round" stroke-linejoin="round"/></svg>
<div style="left:1497.5px;top:1134px;width:15px;height:15px;border-radius:50%;background:#f7b042"></div>
<span class="t" style="left:1517.3px;top:1125px;font-size:18px;line-height:36px;color:#999;">上行</span>
<span class="t" style="left:1487.8px;top:1157px;font-size:22.5px;line-height:45px;color:#666;letter-spacing:-1.2px;"><i style="font-size:1.04em">4.42 KB</i></span>
<div style="left:1771.8px;top:1134px;width:15px;height:15px;border-radius:50%;background:#52a9ff"></div>
<span class="t" style="left:1791.5px;top:1125px;font-size:18px;line-height:36px;color:#999;">下行</span>
<span class="t" style="left:1761.5px;top:1157px;font-size:22.5px;line-height:45px;color:#666;letter-spacing:-1.15px;"><i style="font-size:1.04em">6.61 KB</i></span>
<span class="t" style="left:2045.6px;top:1125px;font-size:18px;line-height:36px;color:#999;">总发送</span>
<span class="t" style="left:2019.2px;top:1157px;font-size:22.5px;line-height:45px;color:#666;letter-spacing:-0.7px;"><i style="font-size:1.04em">236.17 MB</i></span>
<span class="t" style="left:2319.5px;top:1125px;font-size:18px;line-height:36px;color:#999;">总接收</span>
<span class="t" style="left:2293.1px;top:1157px;font-size:22.5px;line-height:45px;color:#666;letter-spacing:-0.65px;"><i style="font-size:1.04em">922.75 MB</i></span>
<span class="t" style="left:1463px;top:1223.5px;font-size:18px;line-height:36px;color:#999;">单位</span>
<div style="left:1511px;top:1218px;width:104.5px;height:44.5px;border:1px solid #dcdfe6;border-radius:6px;background:#fff"></div>
<span class="t" style="left:1526.2px;top:1223px;font-size:18px;line-height:36px;color:#666;letter-spacing:-0.15px;"><i style="font-size:1.04em">KB/s</i></span>
<svg style="left:1590px;top:1236px;" width="16" height="9" viewBox="0 0 16 9"><path d="M1 1 L8 8 L15 1" fill="none" stroke="#bcbfc5" stroke-width="1.4" stroke-linecap="round" stroke-linejoin="round"/></svg>
<svg style="left:1389px;top:1264px" width="1095" height="154" viewBox="1389 1264 1095 154"><defs><linearGradient id="gb" x1="0" y1="0" x2="0" y2="1"><stop offset="0" stop-color="#62afff"/><stop offset="1" stop-color="#9dcdfd"/></linearGradient><clipPath id="cb"><path d="M1911.2 1422 L2200.4 1277.2 L2229.1 1277.2 L2229.1 1422 Z"/></clipPath></defs><path d="M1498.5 1278.4 H2374.5" stroke="#dddddd" stroke-width="1.4"/><path d="M1498.5 1323.6 H2374.5" stroke="#dddddd" stroke-width="1.4"/><path d="M1498.5 1368.7 H2374.5" stroke="#dddddd" stroke-width="1.4"/><path d="M1498.5 1413.6 H2374.5" stroke="#dddddd" stroke-width="1.4"/><path d="M1911.2 1422 L2200.4 1277.2 L2229.1 1277.2 L2229.1 1422 Z" fill="url(#gb)"/><g clip-path="url(#cb)"><path d="M1900 1323.6 H2230" stroke="#6f9fd6" stroke-width="1.3" opacity=".5"/><path d="M1900 1368.7 H2230" stroke="#6f9fd6" stroke-width="1.3" opacity=".5"/><path d="M1900 1413.6 H2230" stroke="#6f9fd6" stroke-width="1.3" opacity=".5"/><path d="M2007.8 1422 L2229.1 1373.1 L2229.1 1422 Z" fill="#919fa8"/><path d="M2007.8 1413.6 H2230" stroke="#7d8a92" stroke-width="1.3" opacity=".6"/></g><path d="M1911.2 1422 L2200.4 1277.2 L2229.1 1277.2" fill="none" stroke="#4da3fb" stroke-width="1.5"/><path d="M2007.8 1422 L2229.1 1373.1" fill="none" stroke="#f5b040" stroke-width="1.8"/></svg>
<span class="t" style="left:1466px;top:1258.7px;font-size:18px;line-height:36px;color:#666;letter-spacing:-0.1px;"><i style="font-size:1.04em">14</i></span>
<span class="t" style="left:1465.5px;top:1303.7px;font-size:18px;line-height:36px;color:#666;letter-spacing:0.9px;"><i style="font-size:1.04em">12</i></span>
<span class="t" style="left:1465.5px;top:1348.7px;font-size:18px;line-height:36px;color:#666;letter-spacing:0.9px;"><i style="font-size:1.04em">10</i></span>
<span class="t" style="left:1476.2px;top:1393.7px;font-size:18px;line-height:36px;color:#666;letter-spacing:0.7px;"><i style="font-size:1.04em">8</i></span>
<!-- sec_misc -->
<div style="left:2507px;top:3px;width:10px;height:1415px;background:#f1f1f1"></div>
<div style="left:2508.3px;top:4px;width:10px;height:1086px;background:#a8a8a8;border-radius:5px 0 0 5px"></div>
<div style="left:2468px;top:1088px;width:56px;height:225px;background:#fff;border-radius:6px;box-shadow:0 0 6px 1px rgba(0,0,0,.12)"></div>
<svg style="left:2483.6px;top:1105.6px;" width="21.4" height="20.4" viewBox="0 0 21.4 20.4"><g fill="#20a53a"><path d="M10.7 0 C5.4 0 1.9 3.3 1.5 8 C0.5 8.3 0 9.2 0 10.3 C0 11.9 1 12.9 2.5 12.9 H3.6 C3.2 11.9 3.1 10.9 3.1 9.8 C5.7 9.6 8 8.4 9.5 6.6 C11.4 8.6 14.4 9.8 18.3 9.8 C18.3 10.9 18.1 11.9 17.8 12.9 H18.9 C20.4 12.9 21.4 11.9 21.4 10.3 C21.4 9.2 20.9 8.3 19.9 8 C19.5 3.3 16 0 10.7 0Z"/><path d="M18.2 13.6 C17.6 16 15.8 17.6 13.2 18 V19.2 C16.4 18.8 18.8 16.8 19.4 13.6Z"/><ellipse cx="11.4" cy="18.8" rx="2" ry="1.4"/></g><path d="M3.4 5.6 C5 2.8 7.6 1.5 10.7 1.5 S16.4 2.8 18 5.6" fill="none" stroke="#fff" stroke-width="0.8" opacity=".9"/><path d="M8 13.6 C9.6 14.9 11.8 14.9 13.4 13.6" fill="none" stroke="#20a53a" stroke-width="1.1" stroke-linecap="round"/></svg>
<span class="t" style="left:2484.2px;top:1129px;font-size:19.5px;line-height:39px;color:#20a53a;">客</span>
<span class="t" style="left:2484.2px;top:1151px;font-size:19.5px;line-height:39px;color:#20a53a;">服</span>
<svg style="left:2484.5px;top:1219px;" width="20" height="20" viewBox="0 0 20 20"><g fill="none" stroke="#20a53a" stroke-width="1.7" stroke-linecap="round" stroke-linejoin="round"><path d="M9.4 2.4 H1.2 V18.8 H17.6 V10.6"/><path d="M7.4 12.8 L8 9.6 L15.8 1.6 L18.4 4.2 L10.6 12.2 Z"/></g></svg>
<span class="t" style="left:2484.2px;top:1243px;font-size:19.5px;line-height:39px;color:#20a53a;">评</span>
<span class="t" style="left:2484.2px;top:1265px;font-size:19.5px;line-height:39px;color:#20a53a;">价</span>
<span class="t" style="left:2139.7px;top:1328.8px;font-size:49px;line-height:98px;color:rgba(232,232,236,.82);text-shadow:1.5px 1.5px 1.5px rgba(70,70,70,.55);"><i style="display:inline-block;transform:scaleX(.915);transform-origin:0 50%;margin-right:-12px;position:relative;top:-1.5px">CSDN</i><i style="display:inline-block;font-size:.84em;transform:scaleX(.9);transform-origin:0 50%;margin-left:17px;margin-right:-1.5px;position:relative;top:-6.5px">@</i><b style="font-weight:300">黄小耶</b><i style="display:inline-block;font-size:.84em;transform:scaleX(.9);transform-origin:0 50%;margin-left:2px;position:relative;top:-6.5px">@</i></span>
</div>
</body>
</html>
